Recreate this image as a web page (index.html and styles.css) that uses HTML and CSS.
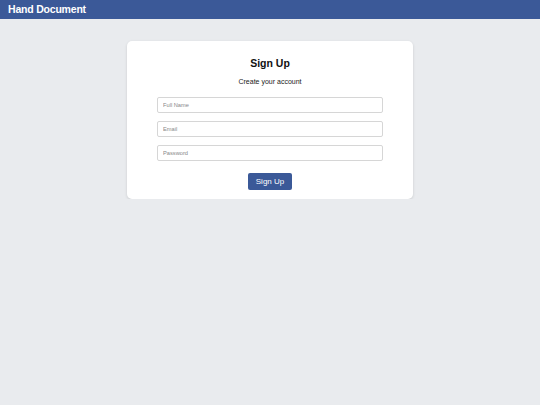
FILE: index.html
```html
<!DOCTYPE html>
<html lang="en">
<head>
  <meta charset="UTF-8">
  <title>Hand Document - Sign Up</title>
  <link rel="stylesheet" href="styles.css">
</head>
<body>
<div class="topbar">Hand Document</div>
<div class="card">
  <h1>Sign Up</h1>
  <p class="sub">Create your account</p>
  <form class="form">
    <input type="text" placeholder="Full Name">
    <input type="email" placeholder="Email">
    <input type="password" placeholder="Password">
    <button type="button">Sign Up</button>
  </form>
</div>
</body>
</html>
```

FILE: styles.css
```css
body { font-family: "Liberation Sans", Arial, sans-serif; background: #e9ebee; margin: 0; padding: 0; }
.topbar { background: #3b5998; color: #fff; height: 19px; line-height: 19px; padding: 0 8px; font-size: 10.5px; letter-spacing: -0.2px; font-weight: bold; }
.card { width: 226px; margin: 22px auto 0; background: #fff; border-radius: 5px; box-shadow: 0 1px 3px #0002; padding: 16px 30px 9px; text-align: center; }
h1 { font-size: 10.5px; line-height: 12px; margin: 0; color: #111; }
.sub { font-size: 7px; line-height: 8px; margin: 9px 0 11px; color: #222; }
.form { display: flex; flex-direction: column; gap: 8px; align-items: center; }
input { box-sizing: border-box; width: 100%; height: 16px; border: 1px solid #d6d6d6; border-radius: 2px; padding: 0 5px; font-family: inherit; font-size: 5.7px; color: #333; }
input::placeholder { color: #888; }
button { margin-top: 4px; height: 17px; padding: 0 8px; font-family: inherit; font-size: 8px; background: #3b5998; color: #fff; border: none; border-radius: 2px; cursor: pointer; }
```
